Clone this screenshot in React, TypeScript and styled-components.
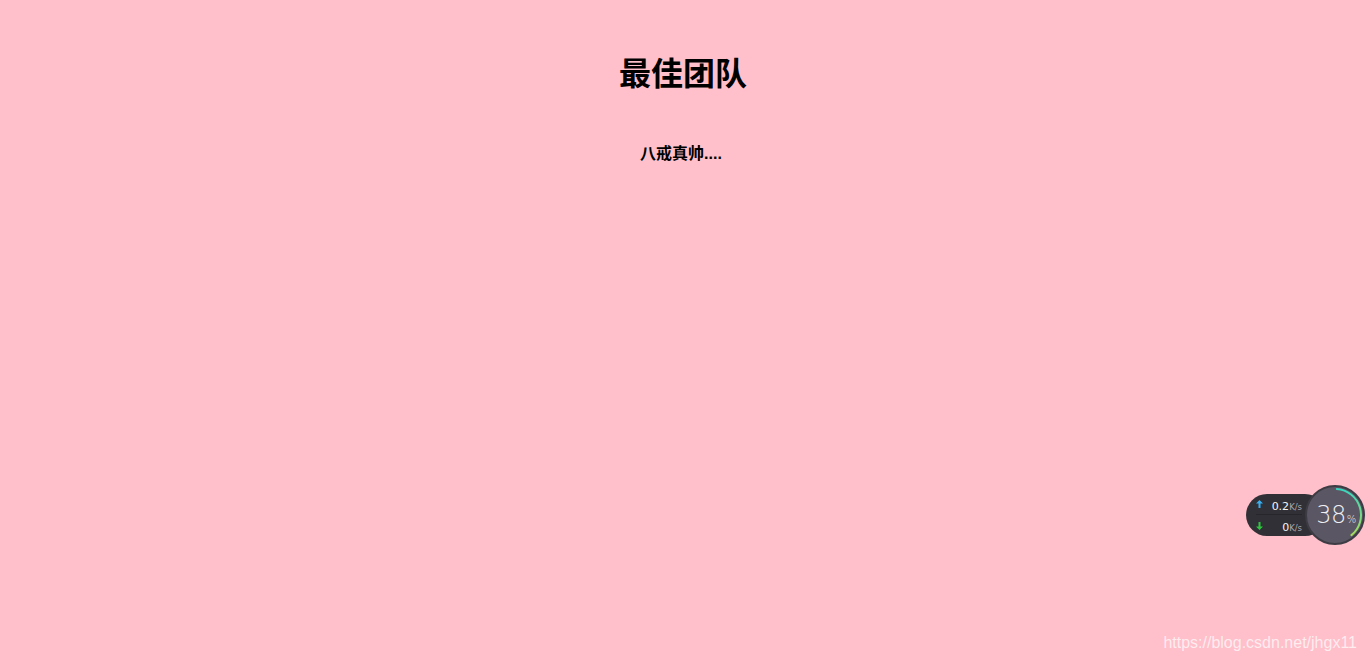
import React from "react";
import styled, { createGlobalStyle } from "styled-components";

const GlobalStyle = createGlobalStyle`
  html, body {
    margin: 0;
    padding: 0;
    background: #ffc0cb;
  }
  body {
    font-family: "Liberation Sans", "Noto Sans CJK SC", sans-serif;
    overflow: hidden;
  }
`;

const Page = styled.div`
  position: relative;
  width: 100vw;
  height: 100vh;
  background: #ffc0cb;
`;

const Content = styled.div`
  display: flex;
  flex-direction: column;
  align-items: center;
  padding-top: 55px;
  font-family: "Liberation Sans", "Noto Sans CJK SC", sans-serif;
  color: #000;
`;

const Title = styled.h1`
  margin: 0;
  font-size: 32px;
  line-height: 38px;
  font-weight: bold;
`;

const Subtitle = styled.h4`
  margin: 51px 0 0;
  padding-right: 4px;
  font-size: 16px;
  line-height: 19px;
  font-weight: bold;
`;

const Widget = styled.div`
  position: absolute;
  left: 1246px;
  top: 485px;
  width: 120px;
  height: 60px;
`;

const Pill = styled.div`
  position: absolute;
  left: 0;
  top: 9px;
  width: 80px;
  height: 42px;
  border-radius: 21px;
  background: #313036;
  display: flex;
  flex-direction: column;
  box-sizing: border-box;
  padding: 0 0 0 10px;
`;

const Row = styled.div<{ $border?: boolean }>`
  height: 21px;
  width: 46px;
  display: flex;
  align-items: center;
  justify-content: space-between;
  border-bottom: ${(p) => (p.$border ? "1px solid #27262b" : "none")};
  box-sizing: border-box;
  font-family: "DejaVu Sans", sans-serif;
`;

const Value = styled.span`
  color: #f4f4f4;
  font-size: 11px;
`;

const Unit = styled.span`
  color: #a9a8ae;
  font-size: 8.5px;
`;

const Circle = styled.div`
  position: absolute;
  left: 59px;
  top: 0;
  width: 60px;
  height: 60px;
  border-radius: 50%;
  background: #5a5663;
  box-sizing: border-box;
  border: 2px solid #3d3b43;
  display: flex;
  align-items: center;
  justify-content: center;
  font-family: "DejaVu Sans", sans-serif;
  color: #f0eff3;
`;

const Ring = styled.svg`
  position: absolute;
  left: -2px;
  top: -2px;
`;

const Percent = styled.span`
  position: relative;
  font-size: 24px;
  font-weight: 200;
  letter-spacing: -0.5px;
  margin-top: -1px;
  margin-left: 2px;
`;

const Small = styled.span`
  font-size: 10px;
  margin-left: 1px;
`;

const Watermark = styled.div`
  position: absolute;
  right: 9px;
  bottom: 10px;
  font-family: "Liberation Sans", sans-serif;
  font-size: 16px;
  color: rgba(255, 255, 255, 0.72);
`;

const arcPath = () => {
  const cx = 30;
  const cy = 30;
  const r = 26;
  const start = -86;
  const end = start + 0.38 * 360;
  const rad = (d: number) => (d * Math.PI) / 180;
  const x1 = cx + r * Math.cos(rad(start));
  const y1 = cy + r * Math.sin(rad(start));
  const x2 = cx + r * Math.cos(rad(end));
  const y2 = cy + r * Math.sin(rad(end));
  return `M ${x1} ${y1} A ${r} ${r} 0 0 1 ${x2} ${y2}`;
};

export default function App() {
  return (
    <Page>
      <GlobalStyle />
      <Content>
        <Title>最佳团队</Title>
        <Subtitle>八戒真帅....</Subtitle>
      </Content>
      <Widget>
        <Pill>
          <Row $border>
            <svg width="7" height="8" viewBox="0 0 7 8">
              <path d="M3.5 0 L7 3.5 H4.5 V8 H2.5 V3.5 H0 Z" fill="#3aaef0" />
            </svg>
            <span>
              <Value>0.2</Value>
              <Unit>K/s</Unit>
            </span>
          </Row>
          <Row>
            <svg width="7" height="8" viewBox="0 0 7 8">
              <path d="M3.5 8 L7 4.5 H4.5 V0 H2.5 V4.5 H0 Z" fill="#2fc53f" />
            </svg>
            <span>
              <Value>0</Value>
              <Unit>K/s</Unit>
            </span>
          </Row>
        </Pill>
        <Circle>
          <Ring width="60" height="60" viewBox="0 0 60 60">
            <defs>
              <linearGradient id="ringGrad" x1="0" y1="0" x2="0" y2="1">
                <stop offset="0" stopColor="#38d6c0" />
                <stop offset="1" stopColor="#a6dc5a" />
              </linearGradient>
            </defs>
            <path
              d={arcPath()}
              fill="none"
              stroke="url(#ringGrad)"
              strokeWidth="2"
              strokeLinecap="round"
            />
          </Ring>
          <Percent>
            38<Small>%</Small>
          </Percent>
        </Circle>
      </Widget>
      <Watermark>https://blog.csdn.net/jhgx11</Watermark>
    </Page>
  );
}
